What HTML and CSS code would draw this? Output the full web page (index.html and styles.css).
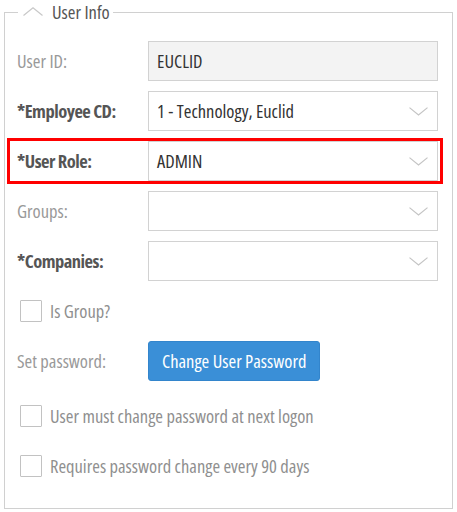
FILE: index.html
```html
<!DOCTYPE html>
<html>
<head>
<meta charset="utf-8">
<link rel="stylesheet" href="styles.css">
</head>
<body>
<fieldset class="panel">
  <legend class="panel-title">
    <svg class="collapse-icon" width="20" height="9" viewBox="0 0 20 9"><path d="M0.5 8.5 L10 0.8 L19.5 8.5" fill="none" stroke="#c8c8c8" stroke-width="1.2"/></svg>
    <span class="legend-text">User Info</span>
  </legend>
  <div class="form">
    <div class="row">
      <label class="label"><span class="txt">User ID:</span></label>
      <div class="field field-disabled"><span class="txt">EUCLID</span></div>
    </div>
    <div class="row">
      <label class="label label-required"><span class="txt">*Employee CD:</span></label>
      <div class="field field-select"><span class="txt">1 - Technology, Euclid</span><svg class="caret" width="19" height="9" viewBox="0 0 19 9"><path d="M0.5 0.6 L9.5 8 L18.5 0.6" fill="none" stroke="#c4c4c4" stroke-width="1.2"/></svg></div>
    </div>
    <div class="row row-highlight">
      <label class="label label-required"><span class="txt">*User Role:</span></label>
      <div class="field field-select"><span class="txt">ADMIN</span><svg class="caret" width="19" height="9" viewBox="0 0 19 9"><path d="M0.5 0.6 L9.5 8 L18.5 0.6" fill="none" stroke="#c4c4c4" stroke-width="1.2"/></svg></div>
    </div>
    <div class="row">
      <label class="label"><span class="txt">Groups:</span></label>
      <div class="field field-select"><span></span><svg class="caret" width="19" height="9" viewBox="0 0 19 9"><path d="M0.5 0.6 L9.5 8 L18.5 0.6" fill="none" stroke="#c4c4c4" stroke-width="1.2"/></svg></div>
    </div>
    <div class="row">
      <label class="label label-required"><span class="txt">*Companies:</span></label>
      <div class="field field-select"><span></span><svg class="caret" width="19" height="9" viewBox="0 0 19 9"><path d="M0.5 0.6 L9.5 8 L18.5 0.6" fill="none" stroke="#c4c4c4" stroke-width="1.2"/></svg></div>
    </div>
    <div class="row">
      <label class="check"><span class="box"></span><span class="txt">Is Group?</span></label>
    </div>
    <div class="row">
      <label class="label"><span class="txt">Set password:</span></label>
      <button class="btn"><span class="txt">Change User Password</span></button>
    </div>
    <div class="row row-spaced">
      <label class="check"><span class="box"></span><span class="txt">User must change password at next logon</span></label>
    </div>
    <div class="row">
      <label class="check"><span class="box"></span><span class="txt">Requires password change every 90 days</span></label>
    </div>
  </div>
</fieldset>
</body>
</html>
```
FILE: styles.css
```css
html, body {
  margin: 0;
  padding: 0;
  background: #fff;
}
body {
  font-family: "Open Sans", "Liberation Sans", Arial, sans-serif;
  font-stretch: 75%;
  font-size: 18.5px;
  color: #333;
}
.txt {
  display: block;
  position: relative;
  top: -1px;
}
.panel {
  margin: 0 4px;
  border: 1px solid #d0d0d0;
  padding: 17px 12px 22px 5px;
  min-width: 0;
}
.panel-title {
  margin-left: 8px;
  padding: 0 3px 0 5px;
  height: 24px;
  display: flex;
  align-items: center;
  gap: 9px;
  color: #555;
}
.legend-text {
  display: block;
  line-height: 24px;
}
.collapse-icon {
  display: block;
  margin-top: -1px;
}
.form {
  display: flex;
  flex-direction: column;
  gap: 10px;
}
.row {
  display: flex;
  align-items: center;
  height: 40px;
  padding: 0 2px 0 7px;
}
.row-highlight {
  outline: 3px solid #f00;
}
.row-spaced {
  margin-top: 5px;
}
.label {
  width: 131px;
  flex: none;
  color: #999;
}
.label-required {
  font-weight: bold;
  color: #555;
  letter-spacing: -0.5px;
}
.field {
  flex: 1;
  height: 40px;
  box-sizing: border-box;
  border: 1px solid #d2d2d2;
  padding: 0 9px 0 8px;
  display: flex;
  align-items: center;
  color: #333;
  background: #fff;
}
.field-disabled {
  background: #f3f3f3;
}
.field-select {
  justify-content: space-between;
}
.caret {
  display: block;
  margin-top: 1px;
}
.check {
  display: flex;
  align-items: center;
  gap: 8px;
  margin-left: 3px;
  color: #8f8f8f;
}
.box {
  width: 22px;
  height: 22px;
  box-sizing: border-box;
  border: 1px solid #c2c2c2;
  background: #fff;
  border-radius: 1px;
}
.btn {
  height: 40px;
  box-sizing: border-box;
  padding: 0 13px;
  border: 1px solid #3385cc;
  border-radius: 3px;
  background: #3a8fd7;
  color: #fff;
  font-family: inherit;
  font-stretch: inherit;
  font-size: inherit;
}
```
